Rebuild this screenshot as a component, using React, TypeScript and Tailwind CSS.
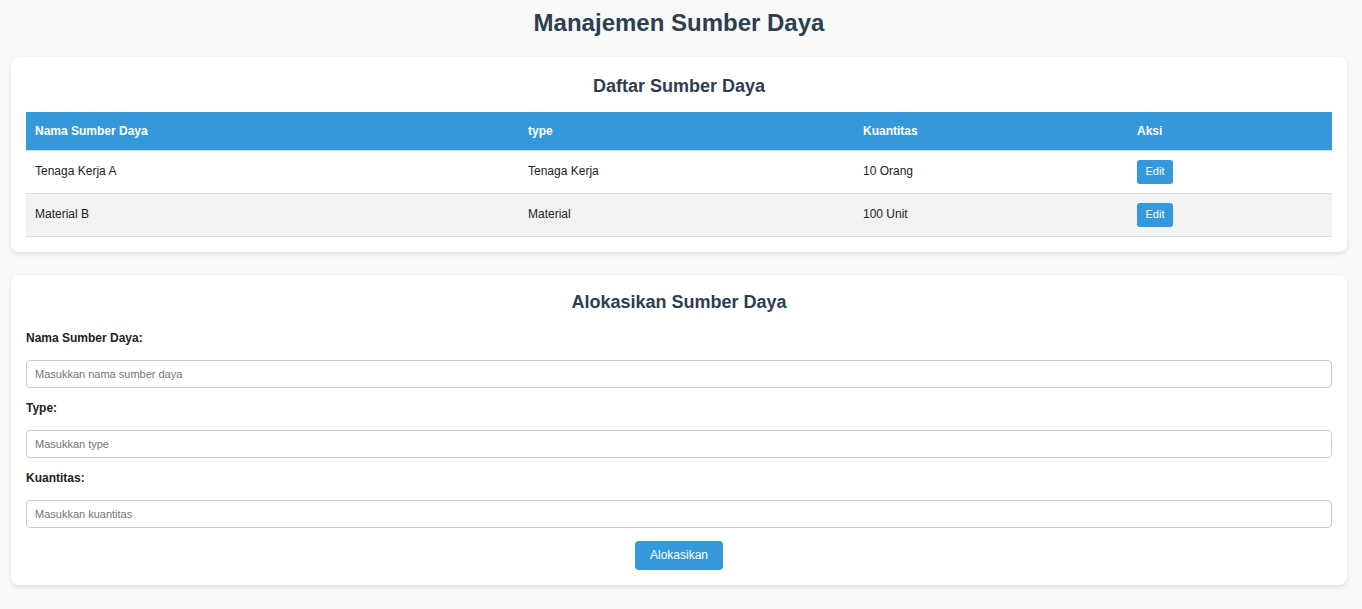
import React from 'react';

const rows = [
  { name: 'Tenaga Kerja A', type: 'Tenaga Kerja', qty: '10 Orang' },
  { name: 'Material B', type: 'Material', qty: '100 Unit' },
];

const fields = [
  { label: 'Nama Sumber Daya:', placeholder: 'Masukkan nama sumber daya' },
  { label: 'Type:', placeholder: 'Masukkan type' },
  { label: 'Kuantitas:', placeholder: 'Masukkan kuantitas' },
];

const App: React.FC = () => {
  return (
    <div className="min-h-screen bg-[#f9f9f9] pl-[11px] pr-[15px] pt-[9px] pb-4 text-[#333] font-['Liberation_Sans',Arial,sans-serif]">
      <h1 className="text-center text-[24px] leading-[28px] font-bold text-[#2c3e50] mb-[20px]">Manajemen Sumber Daya</h1>

      <section className="bg-white rounded-[8px] shadow-[0_2px_5px_rgba(0,0,0,0.1)] px-[15px] pt-[19px] pb-[15px]">
        <h2 className="text-center text-[18px] leading-[21px] font-bold text-[#2c3e50] mb-[15px]">Daftar Sumber Daya</h2>
        <table className="w-full border-collapse text-[12px]">
          <thead>
            <tr className="bg-[#3498db] text-white h-[38px]">
              <th className="w-[493px] text-left font-bold px-[9px] border-b border-[#ddd]">Nama Sumber Daya</th>
              <th className="w-[335px] text-left font-bold px-[9px] border-b border-[#ddd]">type</th>
              <th className="w-[274px] text-left font-bold px-[9px] border-b border-[#ddd]">Kuantitas</th>
              <th className="text-left font-bold px-[9px] border-b border-[#ddd]">Aksi</th>
            </tr>
          </thead>
          <tbody>
            {rows.map((r, i) => (
              <tr key={r.name} className={`h-[43px] ${i % 2 === 1 ? 'bg-[#f2f2f2]' : 'bg-white'}`}>
                <td className="px-[9px] pb-[1px] border-b border-[#ddd] text-[#222]">{r.name}</td>
                <td className="px-[9px] pb-[1px] border-b border-[#ddd] text-[#222]">{r.type}</td>
                <td className="px-[9px] pb-[1px] border-b border-[#ddd] text-[#222]">{r.qty}</td>
                <td className="px-[9px] border-b border-[#ddd]">
                  <button className="bg-[#3498db] text-white text-[11px] rounded-[3px] w-[36px] h-[24px]">Edit</button>
                </td>
              </tr>
            ))}
          </tbody>
        </table>
      </section>

      <section className="mt-[23px] bg-white rounded-[8px] shadow-[0_2px_5px_rgba(0,0,0,0.1)] px-[15px] pt-[17px] pb-[15px]">
        <h2 className="text-center text-[18px] leading-[21px] font-bold text-[#2c3e50] mb-[18px]">Alokasikan Sumber Daya</h2>
        <div className="flex flex-col">
          {fields.map((f) => (
            <div key={f.label} className="flex flex-col">
              <label className="text-[12px] leading-[14px] font-bold text-[#222] mb-[15px]">{f.label}</label>
              <input
                className="h-[28px] border border-[#ccc] rounded-[4px] px-[8px] text-[11px] placeholder:text-[#757575] outline-none mb-[13px]"
                placeholder={f.placeholder}
              />
            </div>
          ))}
          <div className="flex justify-center">
            <button className="bg-[#3498db] text-white text-[12px] rounded-[4px] w-[88px] h-[29px]">Alokasikan</button>
          </div>
        </div>
      </section>
    </div>
  );
};

export default App;
